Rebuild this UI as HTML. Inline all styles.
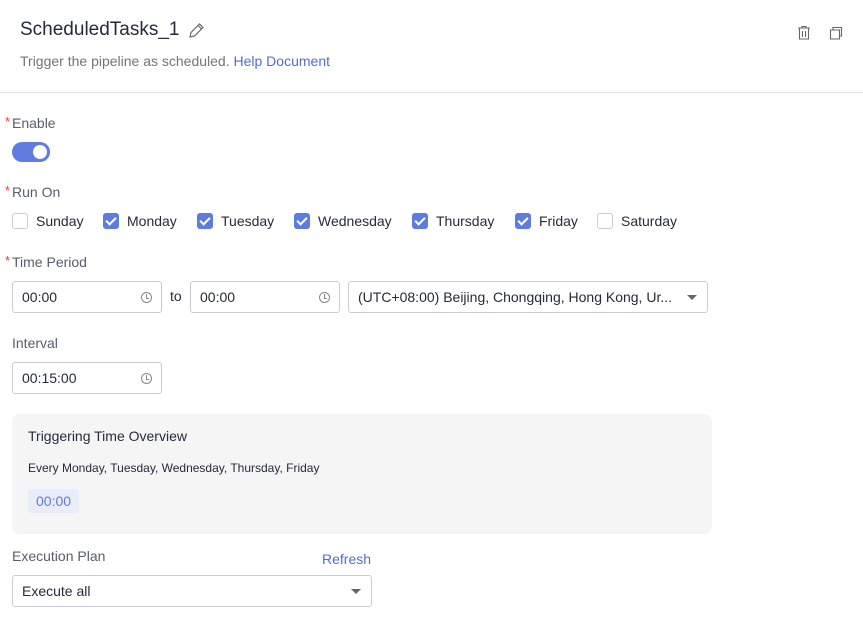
<!DOCTYPE html>
<html><head><style>
*{box-sizing:border-box;margin:0;padding:0}
body{width:863px;height:621px;background:#fff;font-family:"Liberation Sans",sans-serif;color:#252b3a;position:relative;overflow:hidden}
.a{position:absolute}
.lbl{font-size:14px;color:#575d6c}
.req:before{content:"*";color:#f33;position:absolute;left:-7px;top:-1px;font-size:13px}
.inp{position:absolute;height:32px;border:1px solid #c9ccd4;border-radius:3px;font-size:14px;padding:7px 9px;color:#252b3a}
.clk{position:absolute;right:9px;top:10px;width:11px;height:11px;border:1px solid #888;border-radius:50%}
.clk:after{content:"";position:absolute;left:4px;top:1px;width:2px;height:4px;border-left:1px solid #888;border-bottom:1px solid #888}
.cb{position:absolute;top:213px;width:16px;height:16px;border-radius:3px;background:#5e7ce0}
.cb.off{background:#fff;border:1px solid #c9ccd4}
.cb:not(.off):after{content:"";position:absolute;left:5px;top:2px;width:4px;height:8px;border:solid #fff;border-width:0 2px 2px 0;transform:rotate(45deg)}
.day{position:absolute;top:213px;font-size:14px}
.caret{position:absolute;right:10px;top:13px;border:5px solid transparent;border-top:5px solid #666}
</style></head><body>
<div class="a" style="left:20px;top:19px;font-size:19px">ScheduledTasks_1</div>
<svg class="a" style="left:187px;top:22px" width="18" height="18" viewBox="0 0 18 18"><path d="M3 15l1-4.5 8.5-8.5 3.5 3.5-8.5 8.5z M11 3.5l3.5 3.5" fill="none" stroke="#666" stroke-width="1.2"/></svg>
<div class="a" style="left:20px;top:53px;font-size:14px;color:#71757f">Trigger the pipeline as scheduled. <span style="color:#526ecc">Help Document</span></div>
<svg class="a" style="left:796px;top:25px" width="16" height="16" viewBox="0 0 16 16"><path d="M2 3h12M6 3V1.5h4V3M3.5 3.5v10.5h9V3.5M6.5 6v6M9.5 6v6" fill="none" stroke="#666" stroke-width="1.1"/></svg>
<svg class="a" style="left:828px;top:25px" width="16" height="16" viewBox="0 0 16 16"><path d="M2.5 5h9v9h-9z M5 5V2.5h8.5V11H11.5" fill="none" stroke="#666" stroke-width="1.1"/></svg>
<div class="a" style="left:0;top:92px;width:863px;height:1px;background:#dfe1e6"></div>
<div class="a lbl req" style="left:12px;top:115px">Enable</div>
<div class="a" style="left:12px;top:142px;width:38px;height:20px;border-radius:10px;background:#5e7ce0"><div class="a" style="right:3px;top:3px;width:14px;height:14px;border-radius:50%;background:#fff"></div></div>
<div class="a lbl req" style="left:12px;top:184px">Run On</div>
<div class="cb off" style="left:12px"></div><div class="day" style="left:36px">Sunday</div>
<div class="cb" style="left:103px"></div><div class="day" style="left:127px">Monday</div>
<div class="cb" style="left:197px"></div><div class="day" style="left:221px">Tuesday</div>
<div class="cb" style="left:294px"></div><div class="day" style="left:318px">Wednesday</div>
<div class="cb" style="left:412px"></div><div class="day" style="left:436px">Thursday</div>
<div class="cb" style="left:515px"></div><div class="day" style="left:539px">Friday</div>
<div class="cb off" style="left:597px"></div><div class="day" style="left:621px">Saturday</div>
<div class="a lbl req" style="left:12px;top:254px">Time Period</div>
<div class="inp" style="left:12px;top:281px;width:150px">00:00<span class="clk"></span></div>
<div class="a" style="left:170px;top:288px;font-size:14px">to</div>
<div class="inp" style="left:190px;top:281px;width:150px">00:00<span class="clk"></span></div>
<div class="inp" style="left:348px;top:281px;width:360px">(UTC+08:00) Beijing, Chongqing, Hong Kong, Ur...<span class="caret"></span></div>
<div class="a lbl" style="left:12px;top:335px">Interval</div>
<div class="inp" style="left:12px;top:362px;width:150px">00:15:00<span class="clk"></span></div>
<div class="a" style="left:12px;top:414px;width:700px;height:120px;background:#f5f5f6;border-radius:8px">
<div class="a" style="left:16px;top:14px;font-size:14px">Triggering Time Overview</div>
<div class="a" style="left:16px;top:47px;font-size:12px">Every Monday, Tuesday, Wednesday, Thursday, Friday</div>
<div class="a" style="left:16px;top:75px;padding:4px 8px;background:#e9edfa;border-radius:3px;font-size:14px;color:#5e7ce0">00:00</div>
</div>
<div class="a lbl" style="left:12px;top:548px">Execution Plan</div>
<div class="a" style="left:322px;top:551px;font-size:14px;color:#526ecc">Refresh</div>
<div class="inp" style="left:12px;top:575px;width:360px">Execute all<span class="caret"></span></div>
</body></html>
